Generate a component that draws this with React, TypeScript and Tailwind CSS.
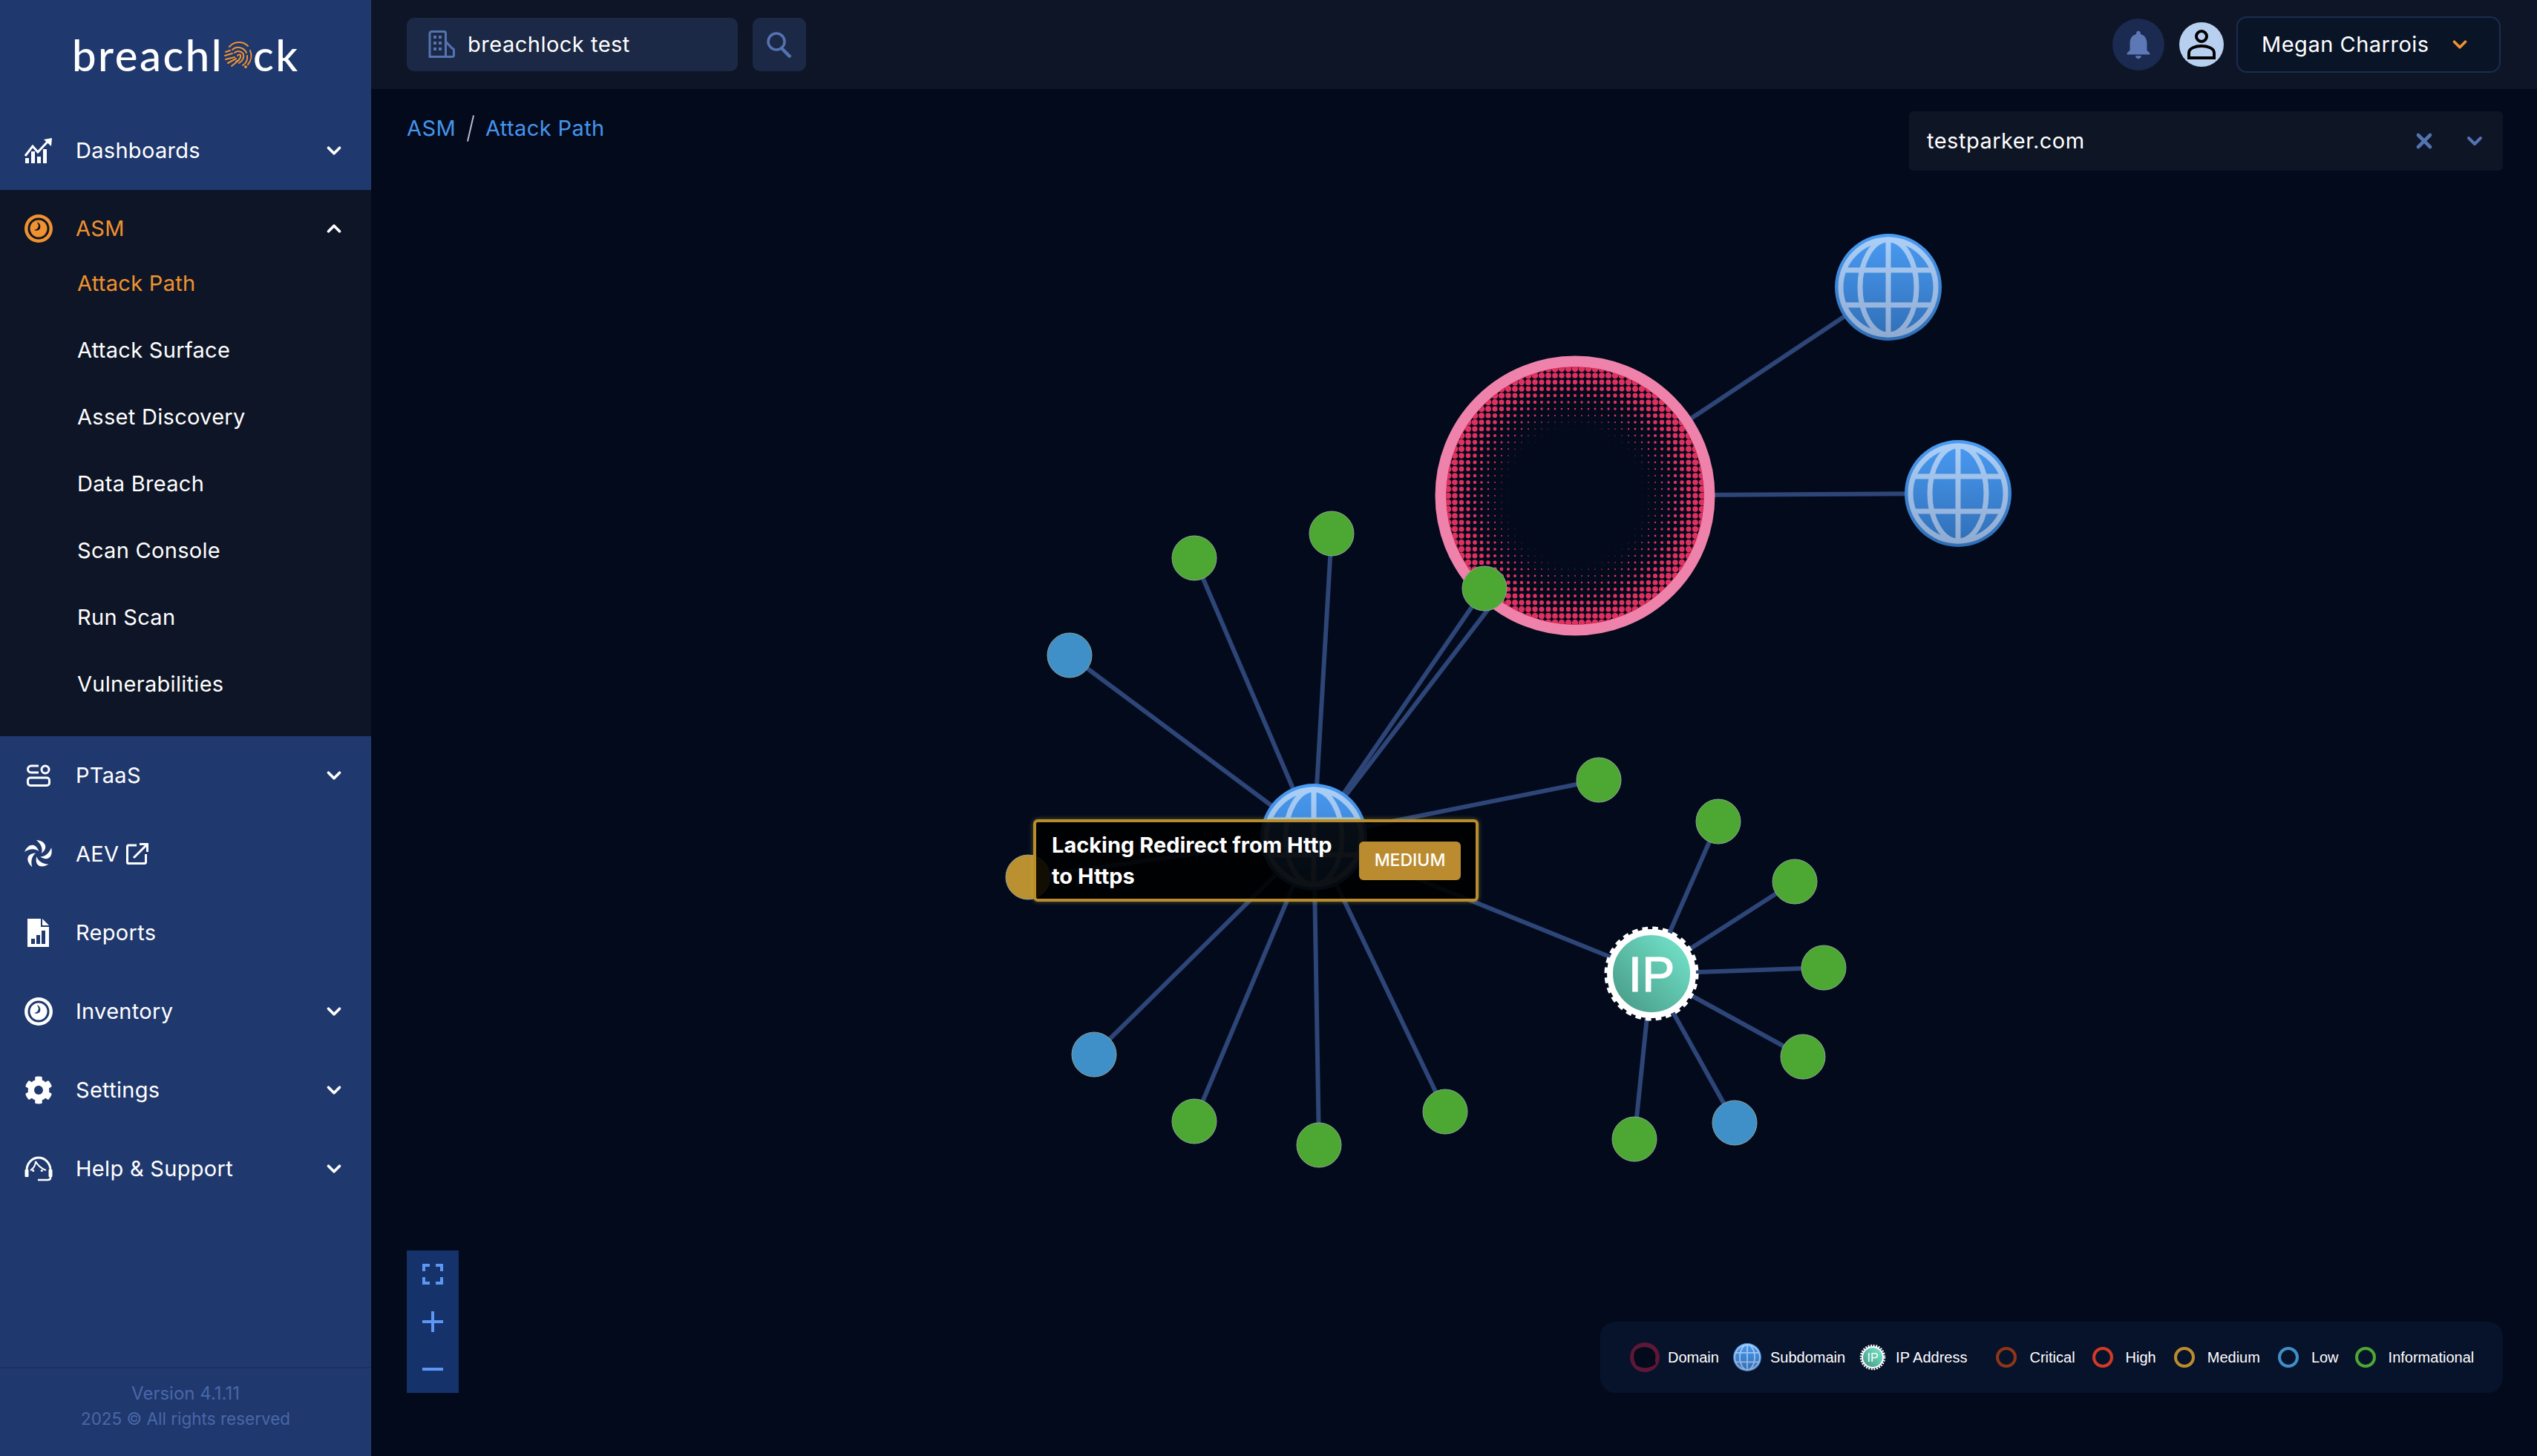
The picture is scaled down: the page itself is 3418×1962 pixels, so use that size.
import { ChevronDown, ChevronUp, X } from 'lucide-react';
import { FaCog } from 'react-icons/fa';
import { MdNotifications } from 'react-icons/md';

const EDGE = '#2d4577';
const GREEN = '#4da733';
const BLUE = '#3f8fc8';

const hub = { x: 1770, y: 1128 };
const ip = { x: 2225, y: 1312 };
const domain = { x: 2122, y: 668 };

const hubLeaves = [
  { x: 1609, y: 752, c: GREEN },
  { x: 1794, y: 719, c: GREEN },
  { x: 1441, y: 883, c: BLUE },
  { x: 2154, y: 1051, c: GREEN },
  { x: 1474, y: 1421, c: BLUE },
  { x: 1609, y: 1511, c: GREEN },
  { x: 1777, y: 1543, c: GREEN },
  { x: 1947, y: 1498, c: GREEN },
  { x: 2000, y: 793, c: GREEN },
  { x: 1385, y: 1182, c: '#bb9030' },
];

const ipLeaves = [
  { x: 2315, y: 1107, c: GREEN },
  { x: 2418, y: 1188, c: GREEN },
  { x: 2457, y: 1304, c: GREEN },
  { x: 2429, y: 1424, c: GREEN },
  { x: 2337, y: 1513, c: BLUE },
  { x: 2202, y: 1535, c: GREEN },
];

const subdomains = [
  { x: 2544, y: 387 },
  { x: 2638, y: 665 },
];

// halftone dots of the domain node
const dots: { x: number; y: number; r: number }[] = [];
for (let i = -20; i <= 20; i++) {
  for (let j = -20; j <= 20; j++) {
    const x = i * 9;
    const y = j * 9;
    const d = Math.sqrt(x * x + y * y);
    if (d > 180 || d < 74) continue;
    dots.push({ x, y, r: 4.5 * Math.pow((d - 70) / 104, 1.6) });
  }
}

function Globe({ x, y, r, id }: { x: number; y: number; r: number; id: string }) {
  const s = r / 72;
  return (
    <g transform={`translate(${x} ${y}) scale(${s})`}>
      <defs>
        <linearGradient id={`${id}-a`} gradientUnits="userSpaceOnUse" x1="0" y1="-72" x2="0" y2="72">
          <stop offset="0" stopColor="#4a9cf5" />
          <stop offset="1" stopColor="#2f6db4" />
        </linearGradient>
        <linearGradient id={`${id}-b`} gradientUnits="userSpaceOnUse" x1="0" y1="-72" x2="0" y2="72">
          <stop offset="0" stopColor="#abd0f8" />
          <stop offset="1" stopColor="#8fa9d0" />
        </linearGradient>
      </defs>
      <circle r="72" fill={`url(#${id}-a)`} />
      <g fill="none" stroke={`url(#${id}-b)`} strokeWidth="7">
        <circle r="64" />
        <ellipse rx="38" ry="64" />
        <line x1="0" y1="-64" x2="0" y2="64" />
        <line x1="-62" y1="-23" x2="62" y2="-23" />
        <line x1="-62" y1="24" x2="62" y2="24" />
      </g>
    </g>
  );
}

function Fingerprint() {
  return (
    <svg viewBox="0 0 40 40" className="h-[40px] w-[40px] shrink-0" fill="none" stroke="#ef922f" strokeWidth="2" strokeLinecap="round">
      <path d="M8 9 A17 17 0 0 1 33 8" />
      <path d="M36 14 A18 18 0 0 1 33 33" />
      <path d="M12 13 A12 12 0 0 1 31 17" />
      <path d="M32 21 A13 13 0 0 1 26 34" />
      <path d="M15 17 A8 8 0 0 1 27 19 C28 24 26 28 21 31" />
      <path d="M19 21 A3 3 0 0 1 23 20 C24 24 21 27 17 29" />
      <path d="M3 16 L9 14" />
      <path d="M2 21 L12 18" />
      <path d="M3 26 L15 23" />
      <path d="M6 31 L17 25" />
      <path d="M11 35 L21 27" />
      <circle cx="30" cy="36" r="1" fill="#ef922f" />
    </svg>
  );
}

function DashIcon() {
  return (
    <svg viewBox="0 0 37 34" className="h-[34px] w-[37px]" fill="#fff">
      <path d="M1 24 L11 11 L18 19 L31 5" fill="none" stroke="#fff" strokeWidth="3" />
      <path d="M26 2 L37 0 L36 11 Z" />
      <rect x="1" y="27" width="5" height="7" />
      <rect x="9" y="18" width="5" height="16" />
      <rect x="17" y="25" width="5" height="9" />
      <rect x="25" y="15" width="5" height="19" />
    </svg>
  );
}

function EyeIcon({ color, hole }: { color: string; hole: string }) {
  return (
    <svg viewBox="0 0 38 38" className="h-[38px] w-[38px]">
      <circle cx="19" cy="19" r="19" fill={color} />
      <circle cx="19" cy="19" r="14.5" fill={hole} />
      <circle cx="19" cy="19" r="11.5" fill={color} />
      <path d="M17 10 A7 7 0 0 1 21 19 A6 6 0 0 1 13 21 A7 7 0 0 0 19 15 Z" fill={hole} />
    </svg>
  );
}

function PtaasIcon() {
  return (
    <svg viewBox="0 0 32 30" className="h-[30px] w-[32px]" fill="none" stroke="#fff" strokeWidth="3">
      <path d="M16 2 H6 A4.5 4.5 0 0 0 6 11 H16" />
      <circle cx="25" cy="7" r="5" />
      <rect x="1.5" y="18" width="29" height="10.5" rx="3.5" />
    </svg>
  );
}

function SwirlIcon() {
  const blade = 'M-3 -19 C9 -18 14 -9 4 -1 C6 -8 3 -14 -3 -19 Z';
  return (
    <svg viewBox="-20 -20 40 40" className="h-[40px] w-[40px]" fill="#fff">
      {[0, 72, 144, 216, 288].map((a) => (
        <path key={a} d={blade} transform={`rotate(${a})`} />
      ))}
    </svg>
  );
}

function ReportIcon() {
  return (
    <svg viewBox="0 0 29 38" className="h-[38px] w-[29px]">
      <path d="M0 0 H18 V11 H29 V38 H0 Z" fill="#fff" />
      <path d="M20 0 L29 9 H20 Z" fill="#fff" />
      <rect x="5" y="27" width="5" height="7" fill="#1f386e" />
      <rect x="12" y="22" width="5" height="12" fill="#1f386e" />
      <rect x="19" y="16" width="5" height="18" fill="#1f386e" />
    </svg>
  );
}

function HelpIcon() {
  return (
    <svg viewBox="0 0 38 36" className="h-[36px] w-[38px]" fill="none" stroke="#fff" strokeWidth="3">
      <path d="M3 20 A16 17 0 0 1 35 20" />
      <path d="M8 20 C12 18 15 13 15 8 C18 14 24 18 29 20" strokeWidth="2" />
      <circle cx="11.7" cy="20.5" r="1.6" fill="#fff" stroke="none" />
      <circle cx="23.3" cy="20.5" r="1.6" fill="#fff" stroke="none" />
      <rect x="0.5" y="19" width="5" height="10" rx="1" fill="#fff" stroke="none" />
      <rect x="32.5" y="19" width="5" height="10" rx="1" fill="#fff" stroke="none" />
      <path d="M35 28 V30 Q35 33 31 33 H18" strokeWidth="2.5" />
    </svg>
  );
}

function ExternalIcon() {
  return (
    <svg viewBox="0 0 30 30" className="h-[30px] w-[30px]" fill="none" stroke="#fff" strokeWidth="3">
      <path d="M14 3 H3 A1.5 1.5 0 0 0 1.5 4.5 V26 A1.5 1.5 0 0 0 3 27.5 H25 A1.5 1.5 0 0 0 26.5 26 V15" />
      <path d="M10 20 L27 3" />
      <path d="M18 1.5 H28.5 V12" />
    </svg>
  );
}

function BuildingIcon() {
  return (
    <svg viewBox="0 0 38 38" className="h-[38px] w-[38px]" fill="none" stroke="#5473b0" strokeWidth="3">
      <path d="M3 35.5 V4 A2.5 2.5 0 0 1 5.5 1.5 H22 A2.5 2.5 0 0 1 24.5 4 V35.5 Z" />
      <path d="M24.5 15 L33 24 A3 3 0 0 1 35.5 27 V33 A2.5 2.5 0 0 1 33 35.5 H24.5" />
      <g fill="#5473b0" stroke="none">
        <rect x="8" y="7" width="4" height="4" />
        <rect x="15" y="7" width="4" height="4" />
        <rect x="8" y="15" width="4" height="4" />
        <rect x="15" y="15" width="4" height="4" />
        <rect x="8" y="23" width="4" height="4" />
        <rect x="15" y="23" width="4" height="4" />
      </g>
    </svg>
  );
}

function NavRow({ icon, label, chevron = true, children }: { icon: React.ReactNode; label: string; chevron?: boolean; children?: React.ReactNode }) {
  return (
    <div className="flex h-[106px] items-center text-[29px] tracking-[0.3px] text-white">
      <div className="flex w-[102px] justify-center pl-[1px]">{icon}</div>
      <span>{label}</span>
      {children}
      {chevron && <ChevronDown className="ml-auto mr-[35px] h-[30px] w-[30px]" strokeWidth={3} color="#fff" />}
    </div>
  );
}

function LegendRing({ color, label, className }: { color: string; label: string; className: string }) {
  return (
    <div className={`flex items-center gap-[17px] ${className}`}>
      <div className="h-[28px] w-[28px] rounded-full border-[4px]" style={{ borderColor: color }} />
      <span>{label}</span>
    </div>
  );
}

export default function App() {
  const subItems = ['Attack Path', 'Attack Surface', 'Asset Discovery', 'Data Breach', 'Scan Console', 'Run Scan', 'Vulnerabilities'];

  return (
    <div className="flex h-[1962px] w-[3418px] overflow-hidden bg-[#030a1c] font-['Inter',sans-serif]">
      {/* Sidebar */}
      <aside className="flex w-[500px] shrink-0 flex-col bg-[#1f386e]">
        <div className="flex h-[150px] items-start pl-[97px] pt-[40px]">
          <div className="flex items-center font-['Lato',sans-serif] text-[58px] font-medium leading-[68px] tracking-[2.5px] text-white">
            <span>breachl</span>
            <Fingerprint />
            <span>ck</span>
          </div>
        </div>
        <NavRow icon={<DashIcon />} label="Dashboards" />

        {/* ASM */}
        <div className="h-[736px] bg-[#0e1526] pt-[27px]">
          <div className="flex h-[50px] items-center text-[29px] tracking-[0.3px] text-[#ef922f]">
            <div className="flex w-[102px] justify-center pl-[1px]">
              <EyeIcon color="#ef922f" hole="#0e1526" />
            </div>
            <span>ASM</span>
            <ChevronUp className="ml-auto mr-[35px] h-[30px] w-[30px]" strokeWidth={3} color="#fff" />
          </div>
          <div className="mt-[4px]">
            {subItems.map((item, i) => (
              <div key={item} className={`flex h-[90px] items-center pl-[104px] text-[29px] tracking-[0.3px] ${i === 0 ? 'text-[#ef922f]' : 'text-white'}`}>
                {item}
              </div>
            ))}
          </div>
        </div>

        <NavRow icon={<PtaasIcon />} label="PTaaS" />
        <NavRow icon={<SwirlIcon />} label="AEV" chevron={false}>
          <span className="ml-[10px]">
            <ExternalIcon />
          </span>
        </NavRow>
        <NavRow icon={<ReportIcon />} label="Reports" chevron={false} />
        <NavRow icon={<EyeIcon color="#fff" hole="#1f386e" />} label="Inventory" />
        <NavRow icon={<FaCog className="h-[38px] w-[38px]" color="#fff" />} label="Settings" />
        <NavRow icon={<HelpIcon />} label="Help & Support" />

        <div className="mt-auto flex h-[120px] flex-col items-center border-t-2 border-[#1b3160] pt-[17px] leading-[34px] text-[#4a67a8]">
          <span className="text-[24px]">Version 4.1.11</span>
          <span className="text-[22.5px]">2025 © All rights reserved</span>
        </div>
      </aside>

      <div className="flex min-w-0 flex-1 flex-col">
        {/* Top bar */}
        <header className="flex h-[120px] shrink-0 items-center bg-[#0e1526] pl-[48px] pr-[49px]">
          <div className="flex h-[72px] w-[446px] items-center gap-[16px] rounded-[10px] bg-[#1c2946] pl-[28px] text-[29px] tracking-[0.5px] text-white">
            <BuildingIcon />
            <span>breachlock test</span>
          </div>
          <div className="ml-[20px] flex h-[72px] w-[72px] items-center justify-center rounded-[10px] bg-[#1c2946]">
            <svg viewBox="0 0 36 36" className="h-[36px] w-[36px]" fill="none" stroke="#5473b0">
              <circle cx="14" cy="14" r="11" strokeWidth="3.5" />
              <path d="M21 23 L33 35" strokeWidth="4.5" />
            </svg>
          </div>
          <div className="ml-auto flex h-[70px] w-[70px] items-center justify-center rounded-full bg-[#1a2a50]">
            <MdNotifications className="h-[46px] w-[46px]" color="#5c78b5" />
          </div>
          <div className="ml-[20px] flex h-[60px] w-[60px] items-center justify-center rounded-full bg-[#b7d0ef]">
            <svg viewBox="0 0 44 44" className="h-[44px] w-[44px]" fill="none" stroke="#000" strokeWidth="4">
              <circle cx="22" cy="11" r="7" />
              <path d="M5 40 V33 C5 27 14 24 22 24 C30 24 39 27 39 33 V40 Z" />
            </svg>
          </div>
          <div className="ml-[17px] flex h-[76px] w-[356px] items-center justify-between rounded-[14px] border-2 border-[#1c2c4f] bg-[#091427] pl-[32px] pr-[38px] text-[29px] tracking-[0.5px] text-white">
            <span>Megan Charrois</span>
            <ChevronDown className="h-[30px] w-[30px]" strokeWidth={3} color="#ef922f" />
          </div>
        </header>

        {/* Content */}
        <main className="relative flex-1">
          <svg viewBox="500 120 2918 1842" className="absolute inset-0 h-[1842px] w-[2918px]">
            <defs>
              <clipPath id="domain-clip">
                <circle cx="0" cy="0" r="174" />
              </clipPath>
              <linearGradient id="ip-grad" x1="0" y1="1" x2="1" y2="0">
                <stop offset="0" stopColor="#43937f" />
                <stop offset="1" stopColor="#78ebd2" />
              </linearGradient>
            </defs>

            <g stroke={EDGE} strokeWidth="6">
              {hubLeaves.map((n) => (
                <line key={`${n.x}-${n.y}`} x1={hub.x} y1={hub.y} x2={n.x} y2={n.y} />
              ))}
              <line x1={hub.x} y1={hub.y} x2={domain.x} y2={domain.y} />
              <line x1={hub.x} y1={hub.y} x2={ip.x} y2={ip.y} />
              {ipLeaves.map((n) => (
                <line key={`${n.x}-${n.y}`} x1={ip.x} y1={ip.y} x2={n.x} y2={n.y} />
              ))}
              {subdomains.map((n) => (
                <line key={n.x} x1={domain.x} y1={domain.y} x2={n.x} y2={n.y} />
              ))}
            </g>

            {/* domain node */}
            <g transform={`translate(${domain.x} ${domain.y})`}>
              <circle r="181" fill="#030a1c" stroke="#ee82aa" strokeWidth="15" />
              <g clipPath="url(#domain-clip)" fill="#e0305f">
                {dots.map((d) => (
                  <circle key={`${d.x}-${d.y}`} cx={d.x} cy={d.y} r={d.r} />
                ))}
              </g>
            </g>

            {subdomains.map((n, i) => (
              <Globe key={n.x} x={n.x} y={n.y} r={72} id={`sub-${i}`} />
            ))}
            <Globe x={hub.x} y={hub.y} r={72} id="hub" />

            {[...hubLeaves, ...ipLeaves].map((n) => (
              <circle key={`${n.x}-${n.y}`} cx={n.x} cy={n.y} r="30" fill={n.c} stroke="#8fa59a" strokeWidth="1" />
            ))}

            {/* ip node */}
            <g transform={`translate(${ip.x} ${ip.y})`}>
              <circle r="56" fill="url(#ip-grad)" stroke="#fff" strokeWidth="8" />
              <circle r="60" fill="none" stroke="#fff" strokeWidth="7" strokeDasharray="7.5 6" />
              <text y="24" textAnchor="middle" fontSize="66" fill="#fff" stroke="#fff" strokeWidth="1.2" fontFamily="'Liberation Sans', sans-serif">
                IP
              </text>
            </g>
          </svg>

          {/* Breadcrumb + domain select */}
          <div className="relative flex items-start justify-between pl-[48px] pr-[46px] pt-[24px]">
            <div className="flex h-[58px] items-center text-[29px] tracking-[0.4px] text-[#4595ec]">
              <span>ASM</span>
              <span className="mx-[19px] h-[36px] w-[2px] rotate-[13deg] bg-[#b8bcc4]" />
              <span>Attack Path</span>
            </div>
            <div className="mt-[6px] flex h-[80px] w-[800px] items-center rounded-[6px] bg-[#0e1525] pl-[24px] pr-[22px] text-[29px] tracking-[0.5px] text-white">
              <span>testparker.com</span>
              <X className="ml-auto h-[32px] w-[32px]" color="#5473b0" strokeWidth={3.5} />
              <ChevronDown className="ml-[36px] h-[32px] w-[32px]" color="#5473b0" strokeWidth={3} />
            </div>
          </div>

          {/* Tooltip */}
          <div className="absolute left-[892px] top-[984px] flex h-[111px] w-[600px] items-center justify-between rounded-[6px] border-[4px] border-[#bb8c2e] bg-black/90 pl-[21px] pr-[20px] shadow-[0_0_6px_rgba(190,200,60,0.45)]">
            <div className="w-[400px] text-[29px] font-bold leading-[42px] text-white">
              Lacking Redirect from Http
              <br />
              to Https
            </div>
            <div className="flex h-[52px] w-[137px] items-center justify-center rounded-[6px] bg-[#bb8c2f] text-[23px] font-medium text-white">MEDIUM</div>
          </div>

          {/* Zoom controls */}
          <div className="absolute bottom-[85px] left-[48px] flex w-[70px] flex-col bg-[#16326a]">
            <div className="flex h-[64px] items-center justify-center">
              <svg viewBox="0 0 28 28" className="h-[28px] w-[28px]" fill="none" stroke="#5c97f5" strokeWidth="4">
                <path d="M2 10 V2 H10 M18 2 H26 V10 M2 18 V26 H10 M18 26 H26 V18" />
              </svg>
            </div>
            <div className="flex h-[64px] items-center justify-center">
              <svg viewBox="0 0 28 28" className="h-[28px] w-[28px]" stroke="#5c97f5" strokeWidth="4">
                <path d="M0 14 H28 M14 0 V28" />
              </svg>
            </div>
            <div className="flex h-[64px] items-center justify-center">
              <svg viewBox="0 0 28 28" className="h-[28px] w-[28px]" stroke="#5c97f5" strokeWidth="4">
                <path d="M0 14 H28" />
              </svg>
            </div>
          </div>

          {/* Legend */}
          <div className="absolute bottom-[85px] right-[46px] flex h-[96px] w-[1216px] items-center rounded-[20px] bg-[#07122b] pl-[40px] font-['Liberation_Sans',sans-serif] text-[20px] text-white">
            <div className="flex items-center gap-[11px]">
              <svg viewBox="-20 -20 40 40" className="h-[40px] w-[40px]">
                <circle r="20" fill="#5e1737" />
                <path d="M-13 -9 C-6 -16 8 -15 12 -8 C17 -2 12 4 15 8 C10 15 -4 16 -11 11 C-15 5 -16 -3 -13 -9 Z" fill="#030a1c" />
              </svg>
              <span>Domain</span>
            </div>
            <div className="ml-[19px] flex items-center gap-[12px]">
              <svg viewBox="-20 -20 40 40" className="h-[38px] w-[38px]">
                <Globe x={0} y={0} r={20} id="legend-globe" />
              </svg>
              <span>Subdomain</span>
            </div>
            <div className="ml-[19px] flex items-center gap-[13px]">
              <svg viewBox="-18 -18 36 36" className="h-[36px] w-[36px]">
                <circle r="14" fill="url(#ip-grad)" stroke="#fff" strokeWidth="2" />
                <circle r="16" fill="none" stroke="#fff" strokeWidth="2.5" strokeDasharray="2 1.6" />
                <text y="6" textAnchor="middle" fontSize="16" fill="#fff" fontFamily="'Liberation Sans', sans-serif">
                  IP
                </text>
              </svg>
              <span>IP Address</span>
            </div>
            <LegendRing color="#8e3517" label="Critical" className="ml-[39px]" />
            <LegendRing color="#d33a25" label="High" className="ml-[23px]" />
            <LegendRing color="#bb8c2e" label="Medium" className="ml-[24px]" />
            <LegendRing color="#3f8fc8" label="Low" className="ml-[24px]" />
            <LegendRing color="#4da733" label="Informational" className="ml-[22px]" />
          </div>
        </main>
      </div>
    </div>
  );
}
